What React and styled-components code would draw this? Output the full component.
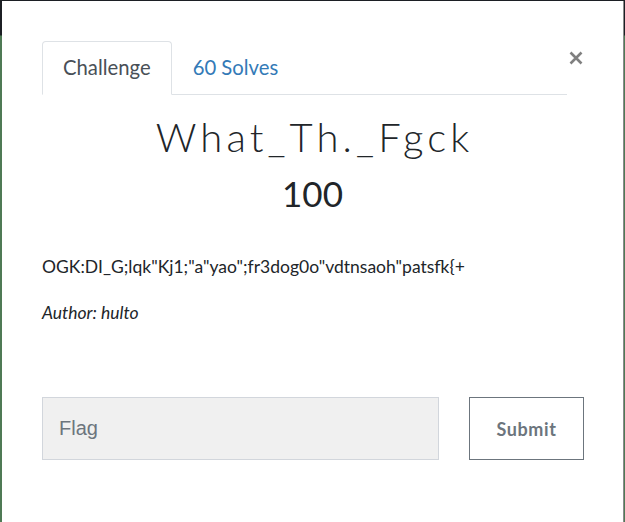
import React from "react";
import styled, { createGlobalStyle } from "styled-components";

const Global = createGlobalStyle`
  html, body { margin: 0; padding: 0; }
  body { background: #1c1f24; font-family: "Lato", "Liberation Sans", sans-serif; }
`;

const Page = styled.div`
  display: flex;
  width: 625px;
  height: 522px;
  overflow: hidden;
  padding-top: 1px;
  box-sizing: border-box;
  background: linear-gradient(#1c1f24 0, #1c1f24 35px, #4f7a55 36px, #4f7a55 100%);
`;

const Modal = styled.div`
  margin-left: 2px;
  width: 622px;
  height: 521px;
  background: #fff;
  border-right: 1px solid #8a8a8a;
  box-sizing: border-box;
  padding: 40px 40px 0 40px;
  display: flex;
  flex-direction: column;
`;

const Header = styled.div`
  display: flex;
  align-items: flex-start;
  width: 541px;
`;

const Nav = styled.ul`
  display: flex;
  list-style: none;
  margin: 0;
  padding: 0;
  width: 525px;
  border-bottom: 1px solid #dee2e6;
`;

const Tab = styled.li`
  margin-bottom: -1px;
  padding: 12px 20px 13px;
  font-size: 20.3px;
  line-height: 27px;
  border: 1px solid ${(p) => (p.$active ? "#dee2e6" : "transparent")};
  border-bottom-color: ${(p) => (p.$active ? "#fff" : "transparent")};
  border-radius: 4px 4px 0 0;
  color: ${(p) => (p.$active ? "#495057" : "#337ab7")};
  background: ${(p) => (p.$active ? "#fff" : "transparent")};
`;

const Close = styled.button`
  margin-left: 2px;
  margin-top: 10px;
  padding: 0;
  border: 0;
  background: none;
  width: 14px;
  height: 14px;
  display: flex;
  color: #808080;
`;

const Title = styled.h2`
  margin: 19px 0 0;
  text-align: center;
  text-indent: 4px;
  font-family: "Lato", sans-serif;
  font-weight: 300;
  font-size: 40px;
  line-height: 46px;
  letter-spacing: 4.1px;
  color: #212529;
`;

const Value = styled.h3`
  margin: 13px 0 0;
  text-align: center;
  font-family: "Lato", sans-serif;
  font-weight: 400;
  font-size: 35px;
  line-height: 40px;
  color: #212529;
`;

const Description = styled.p`
  margin: 41px 0 0;
  font-size: 17.5px;
  line-height: 26px;
  color: #212529;
`;

const Author = styled.p`
  margin: 20px 0 0;
  font-size: 17.5px;
  line-height: 26px;
  font-style: italic;
  color: #212529;
`;

const Form = styled.form`
  display: flex;
  gap: 30px;
  margin-top: 71px;
  width: 542px;
`;

const FlagInput = styled.input`
  width: 397px;
  height: 63px;
  box-sizing: border-box;
  background: #f0f0f0;
  border: 1px solid #d2d6dc;
  padding: 0 16px;
  font-family: "Liberation Sans", Arial, sans-serif;
  font-size: 20px;
  color: #495057;
  outline: none;
  &::placeholder { color: #6c757d; opacity: 1; }
`;

const SubmitButton = styled.button`
  width: 115px;
  height: 63px;
  box-sizing: border-box;
  background: #fff;
  border: 1px solid #6c757d;
  font-family: "Lato", sans-serif;
  font-weight: 700;
  font-size: 18px;
  letter-spacing: 0.6px;
  color: #6c757d;
  padding: 0;
`;

export default function App() {
  return (
    <>
      <Global />
      <Page>
        <Modal>
          <Header>
            <Nav>
              <Tab $active>Challenge</Tab>
              <Tab>60 Solves</Tab>
            </Nav>
            <Close aria-label="Close">
              <svg width="14" height="14" viewBox="0 0 14 14">
                <path d="M1.5 1.5 L12.5 12.5 M12.5 1.5 L1.5 12.5" stroke="currentColor" strokeWidth="2.6" />
              </svg>
            </Close>
          </Header>
          <Title>What_Th._Fgck</Title>
          <Value>100</Value>
          <Description>OGK:DI_G;lqk"Kj1;"a"yao";fr3dog0o"vdtnsaoh"patsfk{"{"}+</Description>
          <Author>Author: hulto</Author>
          <Form onSubmit={(e) => e.preventDefault()}>
            <FlagInput placeholder="Flag" />
            <SubmitButton type="submit">Submit</SubmitButton>
          </Form>
        </Modal>
      </Page>
    </>
  );
}
